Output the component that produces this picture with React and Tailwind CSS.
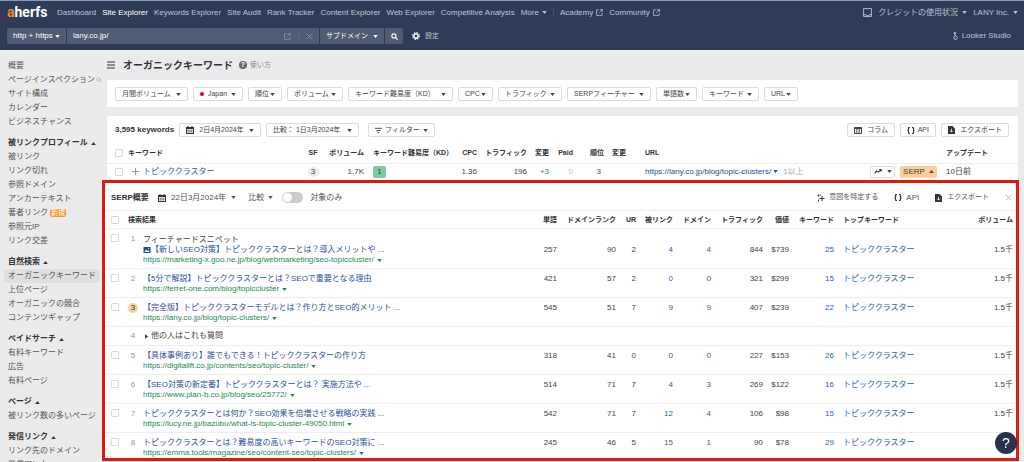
import React, { useState } from 'react';

const NAV_LINKS = [
  'Dashboard',
  'Site Explorer',
  'Keywords Explorer',
  'Site Audit',
  'Rank Tracker',
  'Content Explorer',
  'Web Explorer',
  'Competitive Analysis',
];

const SIDEBAR = [
  {
    items: ['概要', 'ページインスペクション', 'サイト構成', 'カレンダー', 'ビジネスチャンス'],
  },
  {
    title: '被リンクプロフィール',
    items: ['被リンク', 'リンク切れ', '参照ドメイン', 'アンカーテキスト', '著者リンク', '参照元IP', 'リンク交差'],
  },
  {
    title: '自然検索',
    items: ['オーガニックキーワード', '上位ページ', 'オーガニックの競合', 'コンテンツギャップ'],
  },
  { title: 'ペイドサーチ', items: ['有料キーワード', '広告', '有料ページ'] },
  { title: 'ページ', items: ['被リンク数の多いページ'] },
  { title: '発信リンク', items: ['リンク先のドメイン', '発信アンカー'] },
];

const FILTERS = [
  { label: '月間ボリューム', width: 'w-[73px]' },
  { label: 'Japan', width: 'w-[50px]', flag: true },
  { label: '順位', width: 'w-[34px]' },
  { label: 'ボリューム', width: 'w-[56px]' },
  { label: 'キーワード難易度（KD）', width: 'w-[105px]' },
  { label: 'CPC', width: 'w-[35px]' },
  { label: 'トラフィック', width: 'w-[64px]' },
  { label: 'SERPフィーチャー', width: 'w-[84px]' },
  { label: '単語数', width: 'w-[41px]' },
  { label: 'キーワード', width: 'w-[57px]' },
  { label: 'URL', width: 'w-[34px]' },
];

const RESULTS = [
  {
    rank: 1,
    snippet: true,
    title: '【新しいSEO対策】トピッククラスターとは？導入メリットや ...',
    url: 'https://marketing-x.goo.ne.jp/blog/webmarketing/seo-topiccluster/',
    words: 257, dr: 90, ur: 2, backlinks: 4, domains: 4, traffic: 844, value: '$739', keywords: 25, volume: '1.5千',
  },
  {
    rank: 2,
    title: '【5分で解説】トピッククラスターとは？SEOで重要となる理由',
    url: 'https://ferret-one.com/blog/topiccluster',
    words: 421, dr: 57, ur: 2, backlinks: 0, domains: 0, traffic: 321, value: '$299', keywords: 15, volume: '1.5千',
  },
  {
    rank: 3,
    own: true,
    title: '【完全版】トピッククラスターモデルとは？作り方とSEO的メリット ...',
    url: 'https://lany.co.jp/blog/topic-clusters/',
    words: 545, dr: 51, ur: 7, backlinks: 9, domains: 9, traffic: 407, value: '$239', keywords: 22, volume: '1.5千',
  },
  { rank: 4, questions: true },
  {
    rank: 5,
    title: '【具体事例あり】誰でもできる！トピッククラスターの作り方',
    url: 'https://digitalift.co.jp/contents/seo/topic-cluster/',
    words: 318, dr: 41, ur: 0, backlinks: 0, domains: 0, traffic: 227, value: '$153', keywords: 26, volume: '1.5千',
  },
  {
    rank: 6,
    title: '【SEO対策の新定番】トピッククラスターとは？ 実施方法や ...',
    url: 'https://www.plan-b.co.jp/blog/seo/25772/',
    words: 514, dr: 71, ur: 7, backlinks: 4, domains: 3, traffic: 269, value: '$122', keywords: 16, volume: '1.5千',
  },
  {
    rank: 7,
    title: 'トピッククラスターとは何か？SEO効果を倍増させる戦略の実践 ...',
    url: 'https://lucy.ne.jp/bazubu/what-is-topic-cluster-49050.html',
    words: 542, dr: 71, ur: 7, backlinks: 12, domains: 4, traffic: 106, value: '$98', keywords: 15, volume: '1.5千',
  },
  {
    rank: 8,
    title: 'トピッククラスターとは？難易度の高いキーワードのSEO対策に ...',
    url: 'https://emma.tools/magazine/seo/content-seo/topic-clusters/',
    words: 245, dr: 46, ur: 5, backlinks: 15, domains: 1, traffic: 90, value: '$78', keywords: 29,
  },
];

function Caret({ up, className = '' }) {
  return (
    <svg viewBox="0 0 6 4" className={`w-[5px] h-[3px] shrink-0 pointer-events-none ${className}`} fill="currentColor" aria-hidden="true">
      <path d={up ? 'M0 4L3 0L6 4Z' : 'M0 0H6L3 4Z'} />
    </svg>
  );
}

function ExternalIcon({ className = '' }) {
  return (
    <svg viewBox="0 0 12 12" className={`w-[7px] h-[7px] shrink-0 ${className}`} fill="none" stroke="currentColor" strokeWidth="1.3" aria-hidden="true">
      <path d="M5 1.5H1V11H10.5V7M7 1H11V5M11 1L5.5 6.5" />
    </svg>
  );
}

function SearchIcon({ className = '' }) {
  return (
    <svg viewBox="0 0 12 12" className={className} fill="none" stroke="currentColor" strokeLinecap="round" aria-hidden="true">
      <circle cx="5" cy="5" r="3.5" />
      <path d="M7.8 7.8L11 11" />
    </svg>
  );
}

function CloseIcon({ className = '' }) {
  return (
    <svg viewBox="0 0 12 12" className={`w-[7px] h-[7px] ${className}`} fill="none" stroke="currentColor" strokeWidth="1.4" aria-hidden="true">
      <path d="M1 1L11 11M11 1L1 11" />
    </svg>
  );
}

function CalendarIcon() {
  return (
    <svg viewBox="0 0 16 16" className="w-[8px] h-[8px] shrink-0" aria-hidden="true">
      <path fill="#333" fillRule="evenodd" d="M3 0H5V2H11V0H13V2H16V16H0V2H3ZM2 6V14H14V6Z" />
      <path stroke="#333" strokeWidth="2" strokeDasharray="2.4 1.2" d="M3.2 8.5H13M3.2 11.7H13" />
    </svg>
  );
}

function ColumnsIcon() {
  return (
    <svg viewBox="0 0 16 14" className="w-[8px] h-[7px] shrink-0" fill="none" stroke="#333" strokeWidth="1.8" aria-hidden="true">
      <path d="M1 1H15V13H1ZM5.7 1V13M10.3 1V13M1 3H15" />
    </svg>
  );
}

function BracesIcon() {
  return (
    <svg viewBox="0 0 16 14" className="w-[8px] h-[7px] shrink-0" fill="none" stroke="#333" strokeWidth="2.4" aria-hidden="true">
      <path d="M6 1H5Q3 1 3 3V5Q3 7 1 7Q3 7 3 9V11Q3 13 5 13H6M10 1H11Q13 1 13 3V5Q13 7 15 7Q13 7 13 9V11Q13 13 11 13H10" />
    </svg>
  );
}

function ExportIcon() {
  return (
    <svg viewBox="0 0 14 16" className="w-[7px] h-[8px] shrink-0" aria-hidden="true">
      <path fill="#333" d="M0 0H9L14 5V16H0Z" />
      <path stroke="#fff" strokeWidth="1.6" fill="none" d="M7 5.5V12M4 9.3L7 12.3L10 9.3" />
    </svg>
  );
}

function SparkleIcon() {
  return (
    <svg viewBox="0 0 16 16" className="w-[8px] h-[8px] shrink-0" stroke="#333" strokeWidth="2" aria-hidden="true">
      <path d="M10 4V14M5 9H15M3 1V5M1 3H5M3 11V15M7 1V3" />
    </svg>
  );
}

function Checkbox({ label }) {
  return (
    <input
      type="checkbox"
      aria-label={label}
      className="block appearance-none w-[8px] h-[8px] rounded-[1px] border border-[#d9d9d9] bg-white checked:bg-[#2a5db0]"
    />
  );
}

function OutlineButton({ children, className = '' }) {
  return (
    <button
      type="button"
      className={`flex h-[14px] shrink-0 items-center justify-between rounded-[2px] border border-[#dcdcdc] bg-white px-[6px] text-[7px] leading-[12px] text-[#444] ${className}`}
    >
      {children}
    </button>
  );
}

function Header() {
  return (
    <header className="shrink-0 border-t border-[#8796b3] bg-[#2e3c57] pt-[4px] pb-[6px] pl-[7px] pr-[6px] text-[8px] text-[#bcc4d3]">
      <div className="flex h-[15px] items-center whitespace-nowrap">
        <a href="#" className="w-[50px] font-['Roboto',sans-serif] text-[14px] font-bold leading-[15px] text-white">
          <span className="text-[#f08a1c]">a</span>herfs
        </a>
        <nav className="flex items-center gap-[6px]">
          {NAV_LINKS.map((label) => (
            <a key={label} href="#" className={label === 'Site Explorer' ? 'text-white' : ''}>
              {label}
            </a>
          ))}
          <button type="button" className="flex items-center gap-[3px]">
            More <Caret />
          </button>
          <span className="h-[8px] w-px bg-[#43516c]" />
          <a href="#" className="flex items-center gap-[3px]">
            Academy <ExternalIcon />
          </a>
          <a href="#" className="flex items-center gap-[3px]">
            Community <ExternalIcon />
          </a>
        </nav>
        <div className="ml-auto flex items-center gap-[6px]">
          <svg viewBox="0 0 16 16" className="h-[9px] w-[9px]" fill="none" stroke="currentColor" strokeWidth="1.6" aria-hidden="true">
            <path d="M1 1H15V15H1ZM1 12H5L6 13.5H10L11 12H15" />
          </svg>
          <button type="button" className="flex items-center gap-[4px]">
            クレジットの使用状況 <Caret />
          </button>
          <button type="button" className="flex items-center gap-[4px]">
            LANY Inc. <Caret />
          </button>
        </div>
      </div>

      <div className="mt-[8px] flex h-[16px] items-center">
        <div className="flex h-full gap-px text-white">
          <label className="flex w-[59px] items-center justify-between rounded-l-[2px] bg-[#4f5c73] px-[6px]">
            <select aria-label="Protocol" className="appearance-none bg-transparent">
              <option>http + https</option>
            </select>
            <Caret />
          </label>
          <div className="flex w-[252px] items-center bg-[#4f5c73] px-[6px] text-[#8d98ab]">
            <input type="text" aria-label="Target" defaultValue="lany.co.jp/" className="min-w-0 flex-1 bg-transparent text-white outline-none" />
            <button type="button" aria-label="Open target">
              <ExternalIcon className="block" />
            </button>
            <span className="mx-[7px] h-[10px] w-px bg-[#5b677d]" />
            <button type="button" aria-label="Clear">
              <CloseIcon className="block" />
            </button>
          </div>
          <label className="flex w-[64px] items-center justify-between bg-[#4f5c73] px-[6px]">
            <select aria-label="Mode" className="appearance-none bg-transparent text-[7px]">
              <option>サブドメイン</option>
            </select>
            <Caret />
          </label>
          <button type="button" aria-label="Search" className="flex w-[18px] items-center justify-center rounded-r-[2px] bg-[#4f5c73]">
            <SearchIcon className="h-[7px] w-[7px] stroke-2" />
          </button>
        </div>
        <button type="button" className="ml-[9px] flex items-center gap-[5px] text-[7px]">
          <svg viewBox="0 0 16 16" className="h-[8px] w-[8px]" fill="none" stroke="#fff" aria-hidden="true">
            <circle cx="8" cy="8" r="4.3" strokeWidth="3" />
            <circle cx="8" cy="8" r="6.8" strokeWidth="2.2" strokeDasharray="2.9 2.44" />
          </svg>
          設定
        </button>
        <a href="#" className="ml-auto mr-[7px] flex items-center gap-[4px]">
          <svg viewBox="0 0 10 16" className="h-[8px] w-[5px]" fill="none" stroke="currentColor" strokeWidth="1.8" aria-hidden="true">
            <circle cx="5" cy="11.5" r="3.5" />
            <path d="M5 8L3 4.5M2.5 1H5V4H2.5Z" />
          </svg>
          Looker Studio
        </a>
      </div>
    </header>
  );
}

function Sidebar() {
  return (
    <aside className="w-[102px] shrink-0 pl-[4px] pt-[9px] text-[8px] leading-[14px] text-[#555]">
      {SIDEBAR.map((group, i) => (
        <div key={i} className="mb-[7px]">
          {group.title && (
            <button type="button" className="flex h-[14px] items-center gap-[3px] whitespace-nowrap pl-[4px] font-bold text-[#333]">
              {group.title}
              <Caret up />
            </button>
          )}
          <ul>
            {group.items.map((item) => (
              <li key={item}>
                <a
                  href="#"
                  className={`flex h-[14px] items-center whitespace-nowrap pl-[4px] ${item === 'オーガニックキーワード' ? 'mr-[2px] rounded-[3px] bg-[#dddfe1]' : ''}`}
                >
                  {item}
                  {item === 'ページインスペクション' && <SearchIcon className="ml-px h-[6px] w-[6px] shrink-0 text-[#999]" />}
                  {item === '著者リンク' && (
                    <span className="ml-[2px] rounded-[2px] bg-[#f7941e] px-px text-[7px] leading-[8px] text-white">新規</span>
                  )}
                </a>
              </li>
            ))}
          </ul>
        </div>
      ))}
    </aside>
  );
}

function FilterBar() {
  return (
    <div className="flex gap-[5px] bg-white px-[8px] pt-[7px] pb-[6px]">
      {FILTERS.map(({ label, width, flag }) => (
        <OutlineButton key={label} className={`whitespace-nowrap ${width}`}>
          {flag && <span className="h-[4px] w-[4px] rounded-full bg-[#d0021b]" />}
          {label}
          <Caret />
        </OutlineButton>
      ))}
    </div>
  );
}

function KeywordTable() {
  return (
    <table className="w-full table-fixed whitespace-nowrap text-right text-[8px] leading-[10px]">
      <colgroup>
        <col className="w-[21px]" />
        <col />
        <col className="w-[30px]" />
        <col className="w-[36px]" />
        <col className="w-[88px]" />
        <col className="w-[25px]" />
        <col className="w-[50px]" />
        <col className="w-[22px]" />
        <col className="w-[24px]" />
        <col className="w-[31px]" />
        <col className="w-[22px]" />
        <col className="w-[244px]" />
        <col className="w-[76px]" />
        <col className="w-[72px]" />
      </colgroup>
      <thead>
        <tr className="h-[19px] border-b border-[#eee] text-[7px] text-[#333]">
          <th className="pl-[8px]"><Checkbox label="すべて選択" /></th>
          <th className="text-left">キーワード</th>
          <th className="text-center">SF</th>
          <th>ボリューム</th>
          <th className="pl-[9px] text-left">キーワード難易度（KD）</th>
          <th>CPC</th>
          <th>トラフィック</th>
          <th>変更</th>
          <th>Paid</th>
          <th>順位</th>
          <th>変更</th>
          <th className="pl-[19px] text-left">URL</th>
          <th />
          <th className="text-left">アップデート</th>
        </tr>
      </thead>
      <tbody>
        <tr className="h-[17px]">
          <td className="pl-[8px]"><Checkbox label="トピッククラスター" /></td>
          <td>
            <div className="flex items-center gap-[4px] pl-[4px]">
              <button type="button" aria-label="追加" className="text-[#888]">
                <svg viewBox="0 0 8 8" className="block h-[7px] w-[7px]" stroke="currentColor" aria-hidden="true">
                  <path d="M4 0V8M0 4H8" />
                </svg>
              </button>
              <a href="#" className="text-[#2a5db0]">トピッククラスター</a>
            </div>
          </td>
          <td className="text-center">
            <span className="inline-block w-[11px] rounded-full bg-[#ececec] text-center">3</span>
          </td>
          <td>1.7K</td>
          <td className="pl-[9px] text-left">
            <span className="inline-block w-[13px] rounded-[2px] bg-[#7ecba1] text-center leading-[12px]">1</span>
          </td>
          <td>1.36</td>
          <td>196</td>
          <td className="text-[#1a9c57]">+3</td>
          <td className="text-[#bbb]">0</td>
          <td className="pr-[3px]">3</td>
          <td />
          <td className="pl-[19px] text-left">
            <a href="#" className="text-[#1d4f91]">
              https://lany.co.jp/blog/topic-clusters/ <Caret className="inline" />
            </a>
            <span className="ml-[5px] text-[#aaa]">1以上</span>
          </td>
          <td>
            <div className="flex gap-[5px]">
              <button type="button" aria-label="チャート" className="flex h-[12px] w-[25px] items-center justify-center gap-[5px] rounded-[2px] border border-[#dcdcdc]">
                <svg viewBox="0 0 12 8" className="h-[5px] w-[8px]" fill="none" stroke="#333" strokeWidth="1.8" aria-hidden="true">
                  <path d="M1 7L4 3L7 5L11 1M8 1H11V4" />
                </svg>
                <Caret />
              </button>
              <button type="button" className="flex h-[12px] w-[37px] items-center justify-center gap-[4px] rounded-[2px] bg-[#fbcf97] text-[#444]">
                SERP <Caret up />
              </button>
            </div>
          </td>
          <td className="text-left">10日前</td>
        </tr>
      </tbody>
    </table>
  );
}

function ResultRow({ result }) {
  // the featured snippet row has an extra line above its title
  const top = result.snippet ? 'pt-[16px]' : 'pt-[5px]';

  if (result.questions) {
    return (
      <tr className="h-[19px] border-b border-[#eee]">
        <td />
        <td className="pr-[5px] text-center text-[#999]">{result.rank}</td>
        <td colSpan={11} className="text-left">
          <button type="button" className="flex items-center gap-[3px] pl-[2px]">
            <svg viewBox="0 0 4 6" className="h-[5px] w-[3px]" fill="#333" aria-hidden="true">
              <path d="M0 0L4 3L0 6Z" />
            </svg>
            他の人はこれも質問
          </button>
        </td>
      </tr>
    );
  }

  return (
    <tr className="border-b border-[#eee] align-top last:border-0">
      <td className="pl-[6px] pt-[5px]"><Checkbox label={result.title} /></td>
      <td className={`pr-[5px] pt-[5px] text-center ${result.own ? 'text-[#333]' : 'text-[#999]'}`}>
        <span className={result.own ? 'block w-[10px] rounded-full bg-[#fbcf97]' : 'block w-[10px]'}>{result.rank}</span>
      </td>
      <td className={`pt-[5px] text-left ${result.rank === RESULTS.length ? '' : 'pb-[3px]'}`}>
        {result.snippet && <div className="leading-[11px]">フィーチャードスニペット</div>}
        <a href="#" className="flex items-center text-[#2a4fa0]">
          {result.snippet && (
            <svg viewBox="0 0 14 12" className="h-[6px] w-[8px] shrink-0" aria-hidden="true">
              <rect width="14" height="12" rx="1" fill="#1d4f91" />
              <path d="M2 10L5 5L8 8L10 6.5L12 10Z" fill="#fff" />
              <circle cx="10" cy="3.5" r="1.2" fill="#fff" />
            </svg>
          )}
          {result.title}
        </a>
        <a href="#" className="flex items-center gap-[3px] text-[#1a8a4c]">
          {result.url}
          <Caret />
        </a>
      </td>
      <td className={top}>{result.words}</td>
      <td className={top}>{result.dr}</td>
      <td className={top}>{result.ur}</td>
      <td className={top}><a href="#" className="text-[#2a5db0]">{result.backlinks}</a></td>
      <td className={top}><a href="#" className="text-[#2a5db0]">{result.domains}</a></td>
      <td className={top}>{result.traffic}</td>
      <td className={top}>{result.value}</td>
      <td className={top}><a href="#" className="text-[#2a5db0]">{result.keywords}</a></td>
      <td className={`pl-[9px] text-left ${top}`}><a href="#" className="text-[#2a5db0]">トピッククラスター</a></td>
      <td className={`pr-[3px] ${top}`}>{result.volume}</td>
    </tr>
  );
}

function SerpPanel() {
  const [targetOnly, setTargetOnly] = useState(false);

  return (
    <section className="-ml-[5px] -mr-px border-[3px] border-[#e0190f] bg-white">
      <div className="flex h-[27px] items-center whitespace-nowrap pl-[6px] pr-[4px] pt-[2px] text-[8px] text-[#555]">
        <h2 className="w-[47px] font-bold text-[#333]">SERP概要</h2>
        <button type="button" className="flex items-center gap-[5px]">
          <CalendarIcon /> 22日3月2024年 <Caret />
        </button>
        <button type="button" className="ml-[12px] flex items-center gap-[4px]">
          比較 <Caret />
        </button>
        <label className="ml-[9px] flex items-center gap-[7px]">
          <input
            type="checkbox"
            role="switch"
            checked={targetOnly}
            onChange={(e) => setTargetOnly(e.target.checked)}
            className="flex h-[11px] w-[21px] appearance-none items-center rounded-full bg-[#ccc] p-px before:h-[9px] before:w-[9px] before:rounded-full before:bg-white before:content-[''] checked:justify-end checked:bg-[#2a5db0]"
          />
          対象のみ
        </label>
        <div className="ml-auto flex items-center gap-[16px] text-[7px]">
          <button type="button" className="flex items-center gap-[4px]">
            <SparkleIcon /> 意図を特定する
          </button>
          <button type="button" className="flex items-center gap-[4px] text-[8px]">
            <BracesIcon /> API
          </button>
          <button type="button" className="flex items-center gap-[5px]">
            <ExportIcon /> エクスポート
          </button>
          <button type="button" aria-label="閉じる" className="text-[#aaa]">
            <CloseIcon className="block" />
          </button>
        </div>
      </div>

      <table className="w-full table-fixed whitespace-nowrap text-right text-[8px] leading-[10px]">
        <colgroup>
          <col className="w-[23px]" />
          <col className="w-[15px]" />
          <col />
          <col className="w-[27px]" />
          <col className="w-[59px]" />
          <col className="w-[20px]" />
          <col className="w-[37px]" />
          <col className="w-[38px]" />
          <col className="w-[52px]" />
          <col className="w-[26px]" />
          <col className="w-[45px]" />
          <col className="w-[132px]" />
          <col className="w-[50px]" />
        </colgroup>
        <thead>
          <tr className="h-[18px] border-y border-[#eee] text-[7px] text-[#333]">
            <th className="pl-[6px]"><Checkbox label="すべて選択" /></th>
            <th colSpan={2} className="text-left">検索結果</th>
            <th>単語</th>
            <th>ドメインランク</th>
            <th>UR</th>
            <th>被リンク</th>
            <th>ドメイン</th>
            <th>トラフィック</th>
            <th>価値</th>
            <th>キーワード</th>
            <th className="pl-[9px] text-left">トップキーワード</th>
            <th className="pr-[3px]">ボリューム</th>
          </tr>
        </thead>
        <tbody>
          {RESULTS.map((result) => (
            <ResultRow key={result.rank} result={result} />
          ))}
        </tbody>
      </table>
    </section>
  );
}

function App() {
  return (
    <div className="flex h-screen flex-col overflow-hidden bg-[#e9ebec] font-['Liberation_Sans','Noto_Sans_CJK_JP',sans-serif] text-[#444]">
      <Header />
      <div className="flex min-h-0 flex-1 overflow-hidden">
        <Sidebar />
        <main className="min-w-0 flex-1 pl-[5px] pr-[6px]">
          <div className="flex h-[30px] items-center">
            <button type="button" aria-label="メニュー" className="mr-[8px] text-[#333]">
              <svg viewBox="0 0 8 8" className="block h-[8px] w-[8px]" stroke="currentColor" strokeWidth="1.2" aria-hidden="true">
                <path d="M0 1H8M0 4H8M0 7H8" />
              </svg>
            </button>
            <h1 className="text-[10px] font-bold text-[#333]">オーガニックキーワード</h1>
            <a href="#" className="ml-[6px] flex items-center gap-[3px] text-[7px] text-[#888]">
              <span className="flex h-[8px] w-[8px] items-center justify-center rounded-full bg-[#666] text-[7px] font-bold leading-[8px] text-white">?</span>
              使い方
            </a>
          </div>

          <FilterBar />

          <div className="mt-[9px] bg-white">
            <div className="flex h-[28px] items-center gap-[5px] whitespace-nowrap pl-[8px] pr-[9px]">
              <p className="w-[59px] text-[8px] font-bold text-[#333]">3,595 keywords</p>
              <OutlineButton className="w-[82px]">
                <CalendarIcon /> 2日4月2024年 <Caret />
              </OutlineButton>
              <OutlineButton className="w-[93px]">
                比較： 1日3月2024年 <Caret />
              </OutlineButton>
              <OutlineButton className="ml-[4px] w-[67px]">
                <svg viewBox="0 0 8 8" className="h-[7px] w-[7px]" stroke="#333" aria-hidden="true">
                  <path d="M0 1.5H8M1.5 4H6.5M3 6.5H5" />
                </svg>
                フィルター <Caret />
              </OutlineButton>
              <OutlineButton className="ml-auto w-[48px]">
                <ColumnsIcon /> コラム
              </OutlineButton>
              <OutlineButton className="w-[36px]">
                <BracesIcon /> API
              </OutlineButton>
              <OutlineButton className="w-[68px]">
                <ExportIcon /> エクスポート
              </OutlineButton>
            </div>
            <KeywordTable />
            <SerpPanel />
          </div>
        </main>
      </div>
      <button
        type="button"
        aria-label="ヘルプ"
        className="fixed bottom-[8px] right-[7px] h-[22px] w-[22px] rounded-full bg-[#28344d] text-[14px] leading-[22px] text-white"
      >
        ?
      </button>
    </div>
  );
}

export default App;
